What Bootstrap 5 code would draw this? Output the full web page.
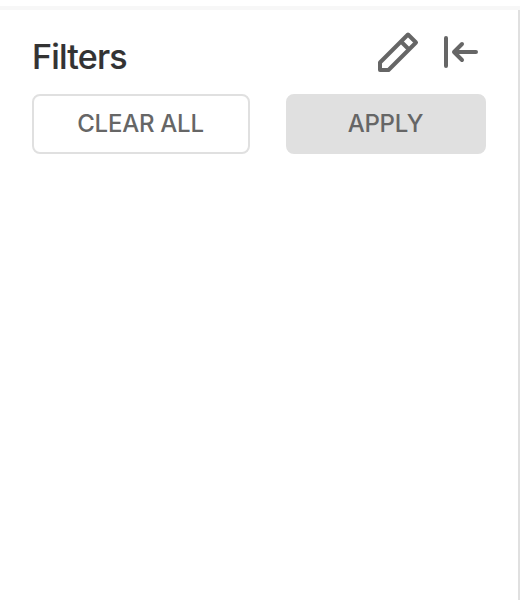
<!DOCTYPE html>
<html lang="en">
<head>
<meta charset="utf-8">
<meta name="viewport" content="width=device-width, initial-scale=1">
<title>Filters</title>
<link href="https://cdn.jsdelivr.net/npm/bootstrap@5.3.0/dist/css/bootstrap.min.css" rel="stylesheet">
<style>
body { font-family: Inter, sans-serif; background: #fff; overflow: hidden; }
.filter-page { height: 600px; padding-top: 6px; }
.top-rule { height: 4px; background: #f7f7f7; }
.filter-panel { border-right: 2px solid #e0e0e0; padding: 20px 32px 0; }
.filter-head { height: 64px; }
.filter-title { font-size: 34px; font-weight: 500; line-height: 40px; letter-spacing: -.8px; color: #333; margin-top: 7px; -webkit-text-stroke: .15px #333; }
.icon-btn { color: #666; line-height: 0; }
.head-icons { gap: 20px; padding-right: 6px; }
.filter-actions { gap: 36px; }
.filter-btn { height: 60px; font-size: 24px; font-weight: 500; line-height: 56px; border: 2px solid #e0e0e0; border-radius: 8px; color: #666; letter-spacing: -.25px; }
.clear-btn { width: 218px; background: #fff; }
.apply-btn { width: 200px; background: #e0e0e0; }
.filter-btn.btn { padding: 0 1px 0 0; }
</style>
</head>
<body>
<div class="filter-page d-flex flex-column">
  <div class="top-rule"></div>
  <aside class="filter-panel flex-grow-1">
    <div class="filter-head d-flex justify-content-between align-items-start">
      <h1 class="filter-title mb-0">Filters</h1>
      <div class="head-icons d-flex">
        <button class="icon-btn btn p-0 border-0" aria-label="Edit">
          <svg width="48" height="48" viewBox="0 0 48 48" fill="none" stroke="currentColor" stroke-width="4" stroke-linejoin="round"><path d="M8 32.5 36 4.5 44 12.5 16.5 40H8ZM29 11.5 37 19.5"/></svg>
        </button>
        <button class="icon-btn btn p-0 border-0" aria-label="Collapse">
          <svg width="40" height="48" viewBox="0 0 40 48" fill="none" stroke="currentColor" stroke-width="4" stroke-linecap="round" stroke-linejoin="round"><path d="M6 8V36M36 22H14M22 14 14 22 22 30"/></svg>
        </button>
      </div>
    </div>
    <div class="filter-actions d-flex">
      <button class="filter-btn clear-btn btn">CLEAR ALL</button>
      <button class="filter-btn apply-btn btn">APPLY</button>
    </div>
  </aside>
</div>
<script src="https://cdn.jsdelivr.net/npm/bootstrap@5.3.0/dist/js/bootstrap.bundle.min.js"></script>
</body>
</html>
